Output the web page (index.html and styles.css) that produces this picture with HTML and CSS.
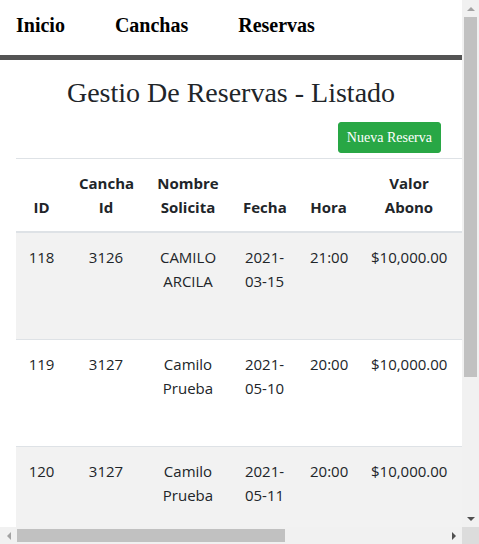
FILE: index.html
```html
<!DOCTYPE html>
<html lang="es">
<head>
<meta charset="utf-8">
<title>Gestio De Reservas - Listado</title>
<link rel="stylesheet" href="styles.css">
</head>
<body>
<div class="window">
  <div class="viewport">
    <nav class="topnav">
      <a class="navlink" href="#">Inicio</a>
      <a class="navlink" href="#">Canchas</a>
      <a class="navlink" href="#">Reservas</a>
    </nav>
    <main class="page">
      <h1 class="title">Gestio De Reservas - Listado</h1>
      <div class="toolbar"><a class="btn btn-success" href="#">Nueva Reserva</a></div>
      <table class="table">
        <colgroup>
          <col class="c-id"><col class="c-cancha"><col class="c-nombre"><col class="c-fecha"><col class="c-hora"><col class="c-valor"><col class="c-acc">
        </colgroup>
        <thead>
          <tr><th>ID</th><th>Cancha Id</th><th>Nombre Solicita</th><th>Fecha</th><th>Hora</th><th>Valor Abono</th><th></th></tr>
        </thead>
        <tbody>
          <tr><td>118</td><td>3126</td><td>CAMILO ARCILA</td><td>2021-03-15</td><td>21:00</td><td>$10,000.00</td><td><div class="acts"></div></td></tr>
          <tr><td>119</td><td>3127</td><td>Camilo Prueba</td><td>2021-05-10</td><td>20:00</td><td>$10,000.00</td><td><div class="acts"></div></td></tr>
          <tr><td>120</td><td>3127</td><td>Camilo Prueba</td><td>2021-05-11</td><td>20:00</td><td>$10,000.00</td><td><div class="acts"></div></td></tr>
        </tbody>
      </table>
    </main>
  </div>
  <div class="vscroll">
    <div class="sb-btn"><span class="arrow arrow-up"></span></div>
    <div class="vtrack"><div class="thumb vthumb"></div></div>
    <div class="sb-btn"><span class="arrow arrow-down"></span></div>
  </div>
  <div class="hscroll">
    <div class="sb-btn"><span class="arrow arrow-left"></span></div>
    <div class="htrack"><div class="thumb hthumb"></div></div>
    <div class="sb-btn"><span class="arrow arrow-right"></span></div>
  </div>
  <div class="corner"></div>
</div>
</body>
</html>
```

FILE: styles.css
```css
html, body {
  margin: 0;
  padding: 0;
  background: #fff;
}
body {
  font-family: "Liberation Serif", "Times New Roman", serif;
  color: #212529;
}
.window {
  display: grid;
  grid-template-columns: 462px 17px;
  grid-template-rows: 527px 17px;
  width: 479px;
  height: 544px;
  overflow: hidden;
}
.viewport {
  overflow: hidden;
  min-width: 0;
  min-height: 0;
  background: #fff;
}
.topnav {
  display: flex;
  gap: 50px;
  padding: 14px 16px 18px;
  border-bottom: 5px solid #545454;
  background: #fff;
}
.navlink {
  font-size: 20px;
  line-height: 23px;
  font-weight: bold;
  color: #000;
  text-decoration: none;
}
.page {
  padding: 0 16px 168px;
}
.title {
  margin: 16px 0 0;
  font-size: 28px;
  line-height: 1.2;
  font-weight: normal;
  text-align: center;
  color: #212529;
}
.toolbar {
  display: flex;
  justify-content: flex-end;
  margin-top: 12px;
  padding-right: 5px;
}
.btn {
  display: inline-block;
  border: 1px solid transparent;
  border-radius: 3px;
  text-decoration: none;
  color: #fff;
}
.btn-success {
  font-family: "Liberation Serif", "Times New Roman", serif;
  font-size: 14px;
  line-height: 21px;
  padding: 4px 8px;
  background: #28a745;
  border-color: #28a745;
}
.table {
  margin-top: 5px;
  width: 722px;
  table-layout: fixed;
  border-collapse: collapse;
  font-family: "Open Sans", "Noto Sans", sans-serif;
  font-size: 15px;
  line-height: 24px;
  color: #212529;
}
.c-id { width: 51px; }
.c-cancha { width: 78px; }
.c-nombre { width: 86px; }
.c-fecha { width: 67px; }
.c-hora { width: 61px; }
.c-valor { width: 100px; }
.c-acc { width: 279px; }
.table th,
.table td {
  padding: 12px;
  border-top: 1px solid #dee2e6;
  text-align: center;
  vertical-align: top;
}
.table thead th {
  vertical-align: bottom;
  border-bottom: 2px solid #dee2e6;
  font-weight: 700;
}
.table tbody tr:nth-child(odd) {
  background: #f2f2f2;
}
.acts {
  height: 82px;
}

/* scrollbars */
.vscroll,
.hscroll {
  display: flex;
  background: #f1f1f1;
}
.vscroll { flex-direction: column; }
.corner { background: #dcdcdc; }
.sb-btn {
  flex: 0 0 17px;
  width: 17px;
  height: 17px;
  display: flex;
  align-items: center;
  justify-content: center;
}
.vtrack {
  flex: 1;
  padding: 0 2px;
}
.htrack {
  flex: 1;
  display: flex;
  align-items: center;
}
.thumb { background: #c1c1c1; }
.vthumb { width: 13px; height: 360px; }
.hthumb { height: 13px; width: 268px; }
.arrow {
  width: 0;
  height: 0;
  border: 4px solid transparent;
}
.arrow-up { border-bottom-color: #a3a3a3; border-top-width: 0; }
.arrow-down { border-top-color: #505050; border-bottom-width: 0; }
.arrow-left { border-right-color: #a3a3a3; border-left-width: 0; }
.arrow-right { border-left-color: #505050; border-right-width: 0; }
```
